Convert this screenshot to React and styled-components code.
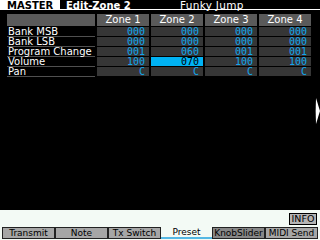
import React from "react";
import styled, { createGlobalStyle } from "styled-components";

const Global = createGlobalStyle`
  html, body { margin: 0; padding: 0; background: #000; }
  body { width: 320px; height: 240px; overflow: hidden; }
  #root { width: 320px; height: 240px; }
`;

const Screen = styled.div`
  position: relative;
  width: 320px;
  height: 240px;
  background: #000;
  display: flex;
  flex-direction: column;
  font-family: "DejaVu Sans", "Liberation Sans", sans-serif;
  color: #fff;
  overflow: hidden;
`;

const Header = styled.div`
  display: flex;
  height: 10px;
  flex: none;
`;

const ModeBox = styled.div`
  width: 60px;
  height: 10px;
  box-sizing: border-box;
  background: #fff;
  color: #000;
  font-weight: bold;
  font-size: 10px;
  line-height: 9px;
  padding: 1px 0 0 7px;
`;

const TitleBar = styled.div`
  flex: 1;
  display: flex;
  height: 10px;
  box-sizing: border-box;
  border-bottom: 1px solid #fff;
  font-size: 10px;
  line-height: 9px;
  padding-top: 1px;
`;

const PageTitle = styled.div`
  font-weight: bold;
  padding-left: 6px;
  width: 114px;
`;

const SongName = styled.div`
  font-size: 10.5px;
  letter-spacing: 0.3px;
`;

const Table = styled.div`
  display: grid;
  grid-template-columns: 88px repeat(4, 52px);
  grid-auto-rows: 9px;
  grid-template-rows: 12px;
  column-gap: 2px;
  row-gap: 1px;
  margin: 4px 0 0 7px;
  flex: none;
`;

const HeadCell = styled.div`
  background: #5a5a5a;
  color: #fff;
  font-size: 10px;
  line-height: 12px;
  text-align: center;
`;

const Label = styled.div`
  font-size: 10px;
  line-height: 10px;
  height: 9px;
  padding-left: 1px;
  white-space: nowrap;
  box-shadow: 0 1px 0 #505050;
  overflow: visible;
`;

const Value = styled.div`
  background: ${(p) => (p.$active ? "#00b2f4" : "#363636")};
  color: ${(p) => (p.$active ? "#000" : "#12a6ee")};
  font-family: "DejaVu Sans Mono", "Liberation Mono", monospace;
  font-size: 10px;
  line-height: 10px;
  height: 9px;
  overflow: hidden;
  text-align: right;
  padding-right: 4px;
`;

const Spacer = styled.div`
  flex: 1;
`;

const Arrow = styled.svg`
  position: absolute;
  right: 0;
  top: 98px;
`;

const Bottom = styled.div`
  flex: none;
  height: 30px;
  background: #f3faf5;
  display: flex;
  flex-direction: column;
  padding-top: 3px;
  box-sizing: border-box;
`;

const InfoRow = styled.div`
  display: flex;
  justify-content: flex-end;
  padding-right: 3px;
`;

const InfoButton = styled.div`
  width: 28px;
  height: 12px;
  box-sizing: border-box;
  border: 1px solid #000;
  background: #b4b4b4;
  color: #000;
  font-size: 9.5px;
  line-height: 10px;
  text-align: center;
`;

const Tabs = styled.div`
  display: flex;
  margin-top: 2px;
  padding: 0 2px;
`;

const Tab = styled.div`
  flex: 1;
  height: 12px;
  box-sizing: border-box;
  border: ${(p) => (p.$selected ? "none" : "1px solid #222")};
  border-bottom: ${(p) => (p.$selected ? "2px solid #55b8e4" : "1px solid #222")};
  background: ${(p) =>
    p.$selected ? "transparent" : p.$dark ? "#878787" : "#a6a6a6"};
  color: #000;
  font-size: 9px;
  line-height: 10px;
  text-align: center;
  white-space: nowrap;
  overflow: hidden;
`;

const zones = ["Zone 1", "Zone 2", "Zone 3", "Zone 4"];
const rows = [
  ["Bank MSB", ["000", "000", "000", "000"]],
  ["Bank LSB", ["000", "000", "000", "000"]],
  ["Program Change", ["001", "060", "001", "001"]],
  ["Volume", ["100", "070", "100", "100"]],
  ["Pan", ["C", "C", "C", "C"]],
];
const tabs = ["Transmit", "Note", "Tx Switch", "Preset", "KnobSlider", "MIDI Send"];

export default function App() {
  return (
    <>
      <Global />
      <Screen>
        <Header>
          <ModeBox>MASTER</ModeBox>
          <TitleBar>
            <PageTitle>Edit-Zone 2</PageTitle>
            <SongName>Funky Jump</SongName>
          </TitleBar>
        </Header>
        <Table>
          <HeadCell />
          {zones.map((z) => (
            <HeadCell key={z}>{z}</HeadCell>
          ))}
          {rows.map(([label, vals], r) => (
            <React.Fragment key={label}>
              <Label>{label}</Label>
              {vals.map((v, i) => (
                <Value key={i} $active={r === 3 && i === 1}>
                  {v}
                </Value>
              ))}
            </React.Fragment>
          ))}
        </Table>
        <Spacer />
        <Arrow width="5" height="26" viewBox="0 0 5 26">
          <path d="M1 0 L5 13 L1 26 Q0.3 13 1 0 Z" fill="#fff" />
        </Arrow>
        <Bottom>
          <InfoRow>
            <InfoButton>INFO</InfoButton>
          </InfoRow>
          <Tabs>
            {tabs.map((t) => (
              <Tab key={t} $selected={t === "Preset"} $dark={t === "KnobSlider"}>
                {t}
              </Tab>
            ))}
          </Tabs>
        </Bottom>
      </Screen>
    </>
  );
}
